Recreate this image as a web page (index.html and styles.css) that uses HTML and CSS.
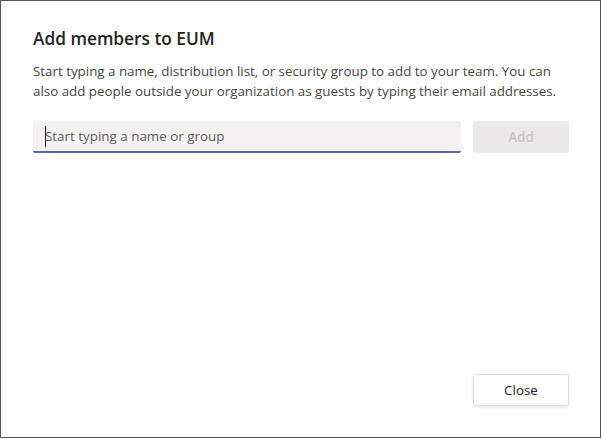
FILE: index.html
```html
<!DOCTYPE html>
<html>
<head>
<meta charset="utf-8">
<link rel="stylesheet" href="styles.css">
</head>
<body>
<div class="dialog">
  <h1 class="title">Add members to EUM</h1>
  <p class="desc">Start typing a name, distribution list, or security group to add to your team. You can also add people outside your organization as guests by typing their email addresses.</p>
  <div class="row">
    <div class="field">
      <span class="caret"></span>
      <input class="input" type="text" placeholder="Start typing a name or group">
    </div>
    <button class="btn add" disabled>Add</button>
  </div>
  <div class="spacer"></div>
  <div class="footer">
    <button class="btn close">Close</button>
  </div>
</div>
</body>
</html>
```
FILE: styles.css
```css
html, body {
  margin: 0;
  padding: 0;
  background: #fff;
}
body {
  font-family: "Open Sans", "Noto Sans", sans-serif;
  color: #252423;
}
.dialog {
  box-sizing: border-box;
  width: 601px;
  height: 438px;
  border: 1px solid #555;
  padding: 26px 31px 31px 32px;
  display: flex;
  flex-direction: column;
}
.title {
  margin: 0;
  font-size: 17.3px;
  line-height: 24px;
  font-weight: 600;
  color: #252423;
}
.desc {
  margin: 10px 0 0 0;
  font-size: 13.35px;
  line-height: 20px;
  color: #484644;
}
.row {
  display: flex;
  gap: 12px;
  margin-top: 20px;
}
.field {
  position: relative;
  width: 428px;
}
.input {
  box-sizing: border-box;
  width: 100%;
  height: 32px;
  border: none;
  border-bottom: 2px solid #6264a7;
  border-radius: 3px 3px 2px 2px;
  background: #f3f2f1;
  padding: 0 12px;
  font-family: inherit;
  font-size: 13.4px;
  outline: none;
}
.input::placeholder {
  color: #605e5c;
}
.caret {
  position: absolute;
  left: 12px;
  top: 5px;
  width: 1px;
  height: 21px;
  background: #252423;
}
.btn {
  box-sizing: border-box;
  width: 96px;
  height: 32px;
  font-family: inherit;
  font-size: 13.4px;
  font-weight: 600;
  border-radius: 3px;
}
.add {
  background: #ebeae9;
  border: none;
  color: #c8c6c4;
}
.spacer {
  flex: 1;
}
.footer {
  display: flex;
  justify-content: flex-end;
}
.close {
  background: #fff;
  border: 1px solid #e1dfdd;
  color: #252423;
  font-weight: 400;
  box-shadow: 0 1px 3px rgba(0,0,0,0.12);
}
```
